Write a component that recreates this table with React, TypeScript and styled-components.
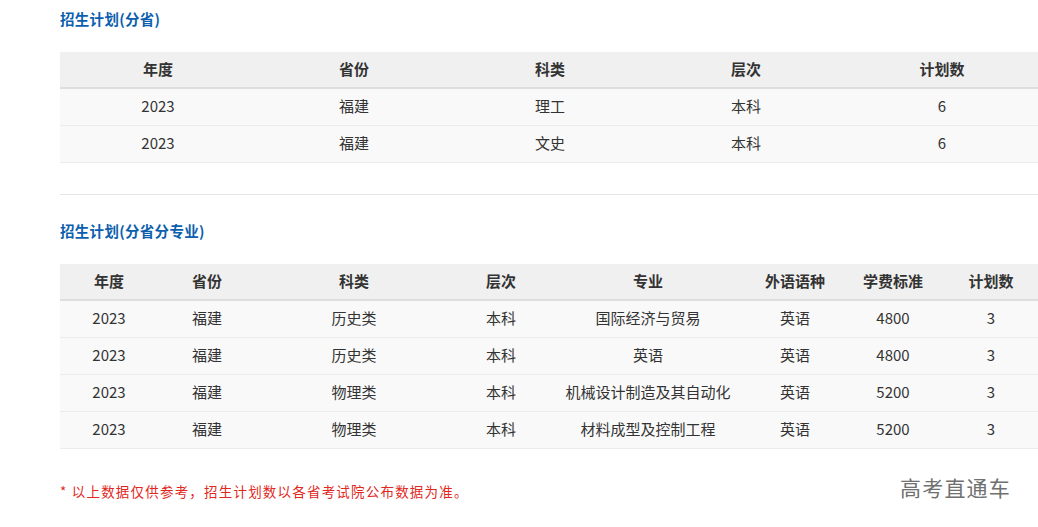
import React from "react";
import styled, { createGlobalStyle } from "styled-components";

const Global = createGlobalStyle`
  html, body { margin: 0; padding: 0; background: #fff; overflow: hidden; }
  body { font-family: "Microsoft YaHei", "Noto Sans CJK SC", "Noto Sans", sans-serif; color: #333; }
`;

const Page = styled.div`
  width: 1038px;
  height: 527px;
  padding-left: 60px;
  box-sizing: border-box;
  position: relative;
`;

const Section = styled.section<{ $top: number }>`
  padding-top: ${(p) => p.$top}px;
`;

const Title = styled.h3`
  margin: 0;
  font-size: 14.5px;
  line-height: 20px;
  font-weight: bold;
  color: #0d5fae;
  letter-spacing: 0.3px;
`;

const Table = styled.table`
  width: 980px;
  border-collapse: collapse;
  table-layout: fixed;
  margin-top: 23px;
  font-size: 15px;
  line-height: 20px;
`;

const Th = styled.th`
  background: #f0f0f0;
  border-bottom: 2px solid #dedede;
  font-weight: bold;
  color: #333;
  text-align: center;
  padding: 7px 0 8px 0;
`;

const Td = styled.td`
  background: #f9f9f9;
  border-bottom: 1px solid #ececec;
  text-align: center;
  color: #333;
  padding: 7px 0 9px 0;
`;

const Divider = styled.hr`
  margin: 31px 0 0 0;
  border: none;
  border-top: 1px solid #e6e6e6;
  width: 978px;
`;

const Note = styled.p`
  margin: 34px 0 0 0;
  font-size: 13.5px;
  line-height: 16px;
  letter-spacing: 1.2px;
  color: #e0281e;
`;

const Watermark = styled.div`
  position: absolute;
  left: 900px;
  top: 473px;
  font-size: 21px;
  line-height: 28px;
  color: #707070;
  letter-spacing: 1.2px;
`;

const t1Head = ["年度", "省份", "科类", "层次", "计划数"];
const t1Rows = [
  ["2023", "福建", "理工", "本科", "6"],
  ["2023", "福建", "文史", "本科", "6"],
];

const t2Head = ["年度", "省份", "科类", "层次", "专业", "外语语种", "学费标准", "计划数"];
const t2Widths = [10, 10, 20, 10, 20, 10, 10, 10];
const t2Rows = [
  ["2023", "福建", "历史类", "本科", "国际经济与贸易", "英语", "4800", "3"],
  ["2023", "福建", "历史类", "本科", "英语", "英语", "4800", "3"],
  ["2023", "福建", "物理类", "本科", "机械设计制造及其自动化", "英语", "5200", "3"],
  ["2023", "福建", "物理类", "本科", "材料成型及控制工程", "英语", "5200", "3"],
];

export default function App() {
  return (
    <Page>
      <Global />
      <Section $top={9}>
        <Title>招生计划(分省)</Title>
        <Table>
          <thead>
            <tr>
              {t1Head.map((h) => (
                <Th key={h}>{h}</Th>
              ))}
            </tr>
          </thead>
          <tbody>
            {t1Rows.map((r, i) => (
              <tr key={i}>
                {r.map((c, j) => (
                  <Td key={j}>{c}</Td>
                ))}
              </tr>
            ))}
          </tbody>
        </Table>
        <Divider />
      </Section>
      <Section $top={26}>
        <Title>招生计划(分省分专业)</Title>
        <Table>
          <colgroup>
            {t2Widths.map((w, i) => (
              <col key={i} style={{ width: `${w}%` }} />
            ))}
          </colgroup>
          <thead>
            <tr>
              {t2Head.map((h, i) => (
                <Th key={i}>{h}</Th>
              ))}
            </tr>
          </thead>
          <tbody>
            {t2Rows.map((r, i) => (
              <tr key={i}>
                {r.map((c, j) => (
                  <Td key={j}>{c}</Td>
                ))}
              </tr>
            ))}
          </tbody>
        </Table>
        <Note>* 以上数据仅供参考，招生计划数以各省考试院公布数据为准。</Note>
      </Section>
      <Watermark>高考直通车</Watermark>
    </Page>
  );
}
